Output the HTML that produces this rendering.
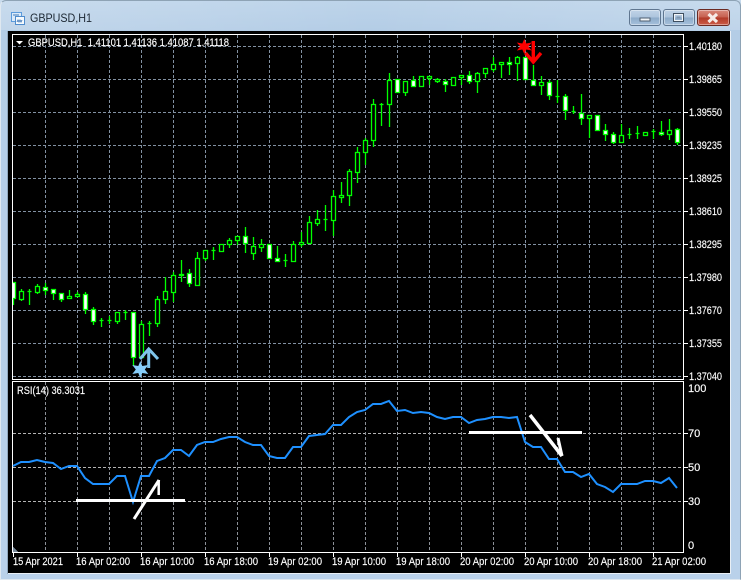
<!DOCTYPE html>
<html><head><meta charset="utf-8"><title>GBPUSD,H1</title>
<style>
html,body{margin:0;padding:0;background:#b9d1ea;}
#w{position:relative;width:741px;height:580px;overflow:hidden;background:linear-gradient(180deg,#bdd4ea 0,#b4cde6 30px,#b9d1ea 100%);}
#w:before{content:"";position:absolute;left:0;top:0;right:0;height:30px;background:linear-gradient(90deg,rgba(255,255,255,.18),rgba(255,255,255,0) 50%,rgba(255,255,255,.15));}
#edge{position:absolute;left:0;top:0;width:739px;height:578px;border:1px solid #8ea3b5;border-bottom-color:#dfe8f0;border-left-color:#dfe8f0;border-radius:6px 6px 0 0;}
.b{position:absolute;top:9px;height:15px;border:1px solid #5f7690;border-radius:3px;box-shadow:inset 0 0 0 1px rgba(255,255,255,.4);background:linear-gradient(180deg,#c0d3e7 0,#adc4dd 48%,#8dabc9 52%,#a6c1dc 100%);}
#cl{background:linear-gradient(180deg,#d98a7c 0,#c6604f 48%,#b23a28 52%,#cc5c48 100%);border-color:#6b2a22;}
svg{position:absolute;left:0;top:0;}
</style></head>
<body><div id="w">
<div id="edge"></div>
<div class="b" style="left:629px;width:30px"></div>
<div class="b" style="left:663px;width:30px"></div>
<div class="b" id="cl" style="left:697px;width:31px"></div>
<svg width="741" height="580" viewBox="0 0 741 580" font-family="'Liberation Sans',sans-serif" shape-rendering="crispEdges">
<text x="30" y="22" font-size="12" fill="#1c2733" textLength="62" lengthAdjust="spacingAndGlyphs" shape-rendering="auto">GBPUSD,H1</text>
<!-- app icon -->
<g>
<rect x="11.5" y="12.5" width="10" height="9" fill="#dcebf9" stroke="#5b9bdc"/>
<rect x="15.5" y="16.5" width="9" height="8" fill="#f6fafd" stroke="#4f8ccc"/>
<path d="M13 15h6M17 22l1-2 1 2 1-2 1 2 1-2" stroke="#3f78b8" fill="none"/>
</g>
<!-- window button glyphs -->
<rect x="640" y="18" width="10" height="3" fill="#f2f5f8" stroke="#4f5f70" stroke-width="1"/>
<rect x="673.5" y="13.5" width="10" height="8" fill="none" stroke="#3f4f60" stroke-width="1"/>
<rect x="674.5" y="14.5" width="8" height="6" fill="none" stroke="#f2f5f8" stroke-width="1"/>
<rect x="676.5" y="16.5" width="4" height="2" fill="#7f97b0"/>
<path d="M708.5 14L717 22M717 14L708.500 22" stroke="#f6ece8" stroke-width="3.200" shape-rendering="auto"/>

<!-- black client -->
<rect x="8" y="31" width="722" height="542" fill="#000"/>
<path d="M730.5 31V574M8 573.5H731" stroke="#e9eff5" stroke-width="1" fill="none"/>
<path d="M7.5 31V574" stroke="#8fa6bc" fill="none"/>

<!-- main grid -->
<g stroke="#8291a2" stroke-width="1" stroke-dasharray="3 2" fill="none">
<path d="M13 46.5H683M13 79.5H683M13 112.5H683M13 145.5H683M13 178.5H683M13 211.5H683M13 244.5H683M13 277.5H683M13 310.5H683M13 343.5H683M13 376.5H683"/>
<path d="M45.5 35V379M77.5 35V379M109.5 35V379M141.5 35V379M173.5 35V379M205.5 35V379M237.5 35V379M269.5 35V379M301.5 35V379M333.5 35V379M365.5 35V379M397.5 35V379M429.5 35V379M461.5 35V379M493.5 35V379M525.5 35V379M557.5 35V379M589.5 35V379M621.5 35V379M653.5 35V379"/>
</g>
<!-- sub grid -->
<g stroke="#b4b4b4" stroke-width="1" stroke-dasharray="3 2" fill="none">
<path d="M13 433.5H683M13 467.5H683M13 501.5H683"/>
</g>
<g stroke="#8c9198" stroke-width="1" stroke-dasharray="3 2" fill="none">
<path d="M45.5 382V552M77.5 382V552M109.5 382V552M141.5 382V552M173.5 382V552M205.5 382V552M237.5 382V552M269.5 382V552M301.5 382V552M333.5 382V552M365.5 382V552M397.5 382V552M429.5 382V552M461.5 382V552M493.5 382V552M525.5 382V552M557.5 382V552M589.5 382V552M621.5 382V552M653.5 382V552"/>
</g>

<!-- candles -->
<svg x="13" y="35" width="670" height="344" viewBox="13 35 670 344" shape-rendering="auto">
<path fill="none" stroke="#00ff00" stroke-width="1.300" d="M13.5 282V305M21.5 289V301M29.5 289V305M37.5 284V294M45.5 283V295M53.5 289V300M61.5 293V302M69.5 290V299M77.5 292V297M85.5 292V314M93.5 307V325M101.5 318V327M109.5 316V324M117.5 312V324M125.5 310V320M133.5 312V366M141.5 321V357M149.5 321V336M157.5 296V327M165.5 277V304M173.5 272V302M181.5 260V282M189.5 269V287M197.5 252V285M205.5 250V261M213.5 247V260M221.5 244V251M229.5 238V248M237.5 236V245M245.5 227V253M253.5 237V260M261.5 239V252M269.5 244V258M277.5 246V262M285.5 254V267M293.5 241V262M301.5 232V247M309.5 216V243M317.5 210V226M325.5 205V231M333.5 190V236M341.5 182V203M349.5 169V206M357.5 147V183M365.5 138V165M373.5 99V147M381.5 103V126M389.5 73V127M397.5 79V92M405.5 81V96M413.5 76V86M421.5 76V87M429.5 76V85M437.5 78V83M445.5 79V92M453.5 77V85M461.5 75V85M469.5 71V84M477.5 72V93M485.5 68V78M493.5 57V72M501.5 62V78M509.5 57V75M517.5 56V81M525.5 57V80M533.5 65V85M541.5 76V95M549.5 80V100M557.5 80V103M565.5 94V120M573.5 106V114M581.5 94V125M589.5 115V138M597.5 115V131M605.5 124V141M613.5 132V144M621.5 124V142M629.5 128V139M637.5 126V139M645.5 132V136M653.5 129V139M661.5 121V136M669.5 119V140M677.5 128V145"/>
<!-- hollow / doji -->
<path fill="#000" stroke="#00ff00" stroke-width="1.300" d="M19.5 291.5h4v8h-4zM27.5 291.5h4M35.5 286.5h4v6h-4zM67.5 296.5h4v2h-4zM75.5 294.5h4v2h-4zM99.5 320.5h4M107.5 320.5h4M115.5 312.5h4v9h-4zM123.5 312.5h4M139.5 324.5h4v33h-4zM147.5 323.5h4M155.5 299.5h4v24h-4zM163.5 291.5h4v8h-4zM171.5 275.5h4v17h-4zM179.5 274.5h4v1h-4zM195.5 258.5h4v27h-4zM203.5 250.5h4v8h-4zM211.5 250.5h4M219.5 244.5h4v7h-4zM227.5 240.5h4v4h-4zM235.5 236.5h4v4h-4zM251.5 246.5h4v7h-4zM259.5 244.5h4v3h-4zM283.5 260.5h4M291.5 244.5h4v17h-4zM299.5 242.5h4v2h-4zM307.5 222.5h4v21h-4zM315.5 219.5h4v4h-4zM323.5 219.5h4M331.5 196.5h4v24h-4zM339.5 195.5h4v2h-4zM347.5 171.5h4v24h-4zM355.5 152.5h4v20h-4zM363.5 140.5h4v12h-4zM371.5 104.5h4v36h-4zM379.5 104.5h4M387.5 80.5h4v24h-4zM403.5 81.5h4v11h-4zM419.5 76.5h4v10h-4zM427.5 76.5h4v2h-4zM435.5 79.5h4v2h-4zM451.5 77.5h4v8h-4zM459.5 75.5h4v2h-4zM475.5 73.5h4v8h-4zM483.5 68.5h4v5h-4zM491.5 64.5h4v5h-4zM499.5 62.5h4v2h-4zM515.5 57.5h4v6h-4zM539.5 82.5h4v3h-4zM555.5 96.5h4M571.5 111.5h4M587.5 115.5h4v3h-4zM619.5 135.5h4v7h-4zM627.5 134.5h4M635.5 133.5h4M643.5 132.5h4v3h-4zM651.5 131.5h4M667.5 130.5h4v4h-4z"/>
<!-- white bodies -->
<path fill="#fff" stroke="#00ff00" stroke-width="1.300" d="M11.5 282.5h4v16h-4zM43.5 287.5h4v3h-4zM51.5 289.5h4v4h-4zM59.5 293.5h4v6h-4zM83.5 294.5h4v15h-4zM91.5 309.5h4v12h-4zM131.5 312.5h4v45h-4zM187.5 273.5h4v10h-4zM243.5 236.5h4v7h-4zM267.5 244.5h4v14h-4zM275.5 258.5h4v3h-4zM395.5 79.5h4v13h-4zM411.5 80.5h4v6h-4zM443.5 81.5h4v3h-4zM467.5 75.5h4v6h-4zM507.5 62.5h4v2h-4zM523.5 57.5h4v22h-4zM531.5 80.5h4v5h-4zM547.5 82.5h4v13h-4zM563.5 96.5h4v14h-4zM579.5 113.5h4v5h-4zM595.5 115.5h4v15h-4zM603.5 130.5h4v4h-4zM611.5 134.5h4v8h-4zM659.5 132.5h4v2h-4zM675.5 129.5h4v13h-4z"/>
</svg>

<!-- frames -->
<g fill="none" stroke="#fff" stroke-width="1">
<rect x="12.5" y="34.5" width="671" height="345"/>
<path d="M12.5 552.5V381.5H683.5V552.5"/>
<path d="M12 552.5H684"/>
<path d="M684 46.5h4M684 79.5h4M684 112.5h4M684 145.5h4M684 178.5h4M684 211.5h4M684 244.5h4M684 277.5h4M684 310.5h4M684 343.5h4M684 376.5h4"/>
<path d="M684 433.5h4M684 467.5h4M684 501.5h4"/>
<path d="M13.5 553v4M77.5 553v4M141.5 553v4M205.5 553v4M269.5 553v4M333.5 553v4M397.5 553v4M461.5 553v4M525.5 553v4M589.5 553v4M653.5 553v4"/>
</g>
<path d="M13 547l5 5h-5z" fill="#778899"/>
<path d="M16 41h7l-3.5 3.5z" fill="#fff" shape-rendering="auto"/>

<!-- RSI -->
<polyline fill="none" stroke="#1e90ff" stroke-width="2" shape-rendering="auto" points="13,466 21,462 29,462 37,460 45,462 53,463 61,469 69,466 77,466 85,478 93,484 101,484 109,484 117,476 125,476 133,502 141,476 149,476 157,461 165,458 173,450 181,450 189,456 197,445 205,442 213,442 221,439 229,437 237,437 245,442 253,445 261,445 269,456 277,458 285,458 293,447 301,447 309,436 317,435 325,434 333,425 341,425 349,417 357,412 365,410 373,404 381,404 389,401 397,411 405,410 413,413 421,412 429,413 437,417 445,419 453,417 461,417 469,423 477,420 485,419 493,417 501,417 509,418 517,417 525,442 533,447 541,447 549,459 557,459 565,472 573,472 581,477 589,474 597,484 605,487 613,492 621,484 629,484 637,484 645,481 653,481 661,483 669,478 677,488"/>

<!-- hand-drawn annotations -->
<g stroke="#fff" fill="none" shape-rendering="auto">
<path d="M76 500.5H185" stroke-width="3"/>
<path d="M134 519L159 480" stroke-width="3"/>
<path d="M158.7 480V495" stroke-width="2.5"/>
<path d="M469 432.5H582" stroke-width="3"/>
<path d="M530 415L562 456" stroke-width="3.500"/>
<path d="M562 456L558 438" stroke-width="3"/>
</g>

<!-- blue arrow + star -->
<g shape-rendering="auto">
<path d="M140 359L148.7 349L158 359M148.7 349V368" fill="none" stroke="#7fc4ea" stroke-width="3"/>
<path d="M140.3 361l2 5 6-1-3.500 4.500 3.500 4.500-6-1-2 5-2-5-6 1 3.500-4.500-3.500-4.500 6 1z" fill="#87cefa"/>
<path d="M533.3 41V61M525.500 53L533.300 62L541 53" fill="none" stroke="#ff0000" stroke-width="3.400"/>
<path d="M524.300 39l2 4.500 5.500-1-3.500 4 3.500 4-5.500-1-2 4.500-2-4.500-5.500 1 3.500-4-3.500-4 5.500 1z" fill="#ff0000"/>
</g>

<!-- text -->
<g fill="#fff" font-size="11" shape-rendering="auto" stroke="#fff" stroke-width="0.150" lengthAdjust="spacingAndGlyphs">
<text x="28" y="46" textLength="201" lengthAdjust="spacingAndGlyphs" xml:space="preserve">GBPUSD,H1&#160;&#160;1.41101 1.41136 1.41087 1.41118</text>
<text x="17" y="394" textLength="68" lengthAdjust="spacingAndGlyphs">RSI(14) 36.3031</text>
<text x="689" y="50" textLength="33" lengthAdjust="spacingAndGlyphs">1.40180</text>
<text x="689" y="83" textLength="33" lengthAdjust="spacingAndGlyphs">1.39865</text>
<text x="689" y="116" textLength="33" lengthAdjust="spacingAndGlyphs">1.39550</text>
<text x="689" y="149" textLength="33" lengthAdjust="spacingAndGlyphs">1.39235</text>
<text x="689" y="182" textLength="33" lengthAdjust="spacingAndGlyphs">1.38925</text>
<text x="689" y="215" textLength="33" lengthAdjust="spacingAndGlyphs">1.38610</text>
<text x="689" y="248" textLength="33" lengthAdjust="spacingAndGlyphs">1.38295</text>
<text x="689" y="281" textLength="33" lengthAdjust="spacingAndGlyphs">1.37980</text>
<text x="689" y="314" textLength="33" lengthAdjust="spacingAndGlyphs">1.37670</text>
<text x="689" y="347" textLength="33" lengthAdjust="spacingAndGlyphs">1.37355</text>
<text x="689" y="380" textLength="33" lengthAdjust="spacingAndGlyphs">1.37040</text>
<text x="688" y="392">100</text>
<text x="688" y="437">70</text>
<text x="688" y="471">50</text>
<text x="688" y="505">30</text>
<text x="688" y="549">0</text>
<text x="13" y="565" textLength="50" lengthAdjust="spacingAndGlyphs">15 Apr 2021</text>
<text x="76" y="565" textLength="54" lengthAdjust="spacingAndGlyphs">16 Apr 02:00</text>
<text x="140" y="565" textLength="54" lengthAdjust="spacingAndGlyphs">16 Apr 10:00</text>
<text x="204" y="565" textLength="54" lengthAdjust="spacingAndGlyphs">16 Apr 18:00</text>
<text x="268" y="565" textLength="54" lengthAdjust="spacingAndGlyphs">19 Apr 02:00</text>
<text x="332" y="565" textLength="54" lengthAdjust="spacingAndGlyphs">19 Apr 10:00</text>
<text x="396" y="565" textLength="54" lengthAdjust="spacingAndGlyphs">19 Apr 18:00</text>
<text x="460" y="565" textLength="54" lengthAdjust="spacingAndGlyphs">20 Apr 02:00</text>
<text x="524" y="565" textLength="54" lengthAdjust="spacingAndGlyphs">20 Apr 10:00</text>
<text x="588" y="565" textLength="54" lengthAdjust="spacingAndGlyphs">20 Apr 18:00</text>
<text x="652" y="565" textLength="54" lengthAdjust="spacingAndGlyphs">21 Apr 02:00</text>
</g>
</svg>
</div></body></html>
